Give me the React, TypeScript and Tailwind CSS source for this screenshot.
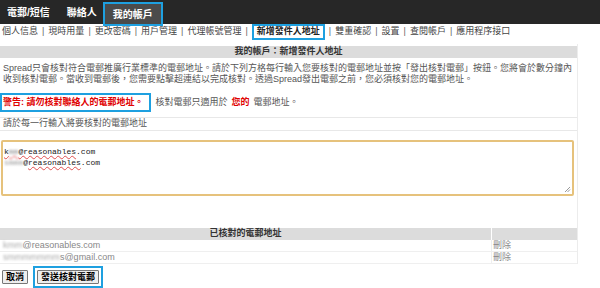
import React from 'react';

const navItems = ['個人信息', '現時用量', '更改密碼', '用戶管理', '代理帳號管理', '新增發件人地址', '雙重確認', '設置', '查閱帳戶', '應用程序接口'];

const verified = [
    { hidden: 'kmm', domain: '@reasonables.com' },
    { hidden: 'smmmmmmm', domain: 's@gmail.com' },
];

export default function App() {
    return (
        <div className="w-[600px] h-[288px] bg-white overflow-hidden font-['Liberation_Sans','Noto_Sans_CJK_TC',sans-serif] text-[#333]">
            {/* top bar */}
            <div className="h-[24px] bg-[#272727] flex items-start pl-[7px] text-white font-bold text-[10px]">
                <div className="h-[24px] flex items-center">電郵/短信</div>
                <div className="h-[24px] flex items-center ml-[17px]">聯絡人</div>
                <div className="relative z-10 ml-[6px] mt-[2px] h-[24px] w-[60px] border-2 border-[#1ea0e0] bg-[#4b4b4b] flex items-center justify-center">
                    我的帳戶
                </div>
            </div>

            {/* sub nav */}
            <div className="h-[16px] flex items-stretch pl-[2px] text-[9px] text-[#444]">
                {navItems.map((item, i) => (
                    <React.Fragment key={item}>
                        {i > 0 && <span className="flex items-center px-[4px] text-[#666]">|</span>}
                        {item === '新增發件人地址' ? (
                            <span className="flex items-center border-2 border-[#1ea0e0] px-[3px] font-bold text-[#222]">{item}</span>
                        ) : (
                            <span className="flex items-center">{item}</span>
                        )}
                    </React.Fragment>
                ))}
            </div>

            {/* panel */}
            <div className="w-[578px] mt-[4px] pt-[2px] border-r border-[#ececec]">
                <div className="h-[12px] bg-[#dcdcdc] flex items-center justify-center text-[9px] font-bold text-[#333]">
                    我的帳戶：新增發件人地址
                </div>

                <p className="mt-[5px] pl-[3px] pr-[4px] text-[9px] leading-[11px] text-[#555]">
                    Spread只會核對符合電郵推廣行業標準的電郵地址。請於下列方格每行輸入您要核對的電郵地址並按「發出核對電郵」按鈕。您將會於數分鐘內收到核對電郵。當收到電郵後，您需要點擊超連結以完成核對。透過Spread發出電郵之前，您必須核對您的電郵地址。
                </p>

                <div className="mt-[8px] flex items-center pb-[5px] border-b border-[#e8e8e8] text-[9px]">
                    <span className="h-[19px] flex items-center border-2 border-[#1ea0e0] pl-[1px] pr-[5px] font-bold text-[#e00000]">
                        警告: 請勿核對聯絡人的電郵地址。
                    </span>
                    <span className="ml-[5px] text-[#555]">核對電郵只適用於</span>
                    <span className="mx-[4px] font-bold text-[#e00000]">您的</span>
                    <span className="text-[#555]">電郵地址。</span>
                </div>

                <div className="h-[13px] flex items-center pl-[3px] border-b border-[#e8e8e8] text-[9px] text-[#555]">
                    請於每一行輸入將要核對的電郵地址
                </div>

                <div className="relative mt-[9px] ml-[1px] w-[573px] h-[56px] border-2 border-[#e6c27c] rounded-[2px] bg-white pt-[4px] pl-[1px] font-['Liberation_Mono',monospace] text-[8px] leading-[11px] text-[#222]">
                    <div>
                        <span className="underline decoration-wavy decoration-[#e05050]">
                            k<span className="blur-[1px] text-[#888]">mm</span>@reasonables
                        </span>
                        .com
                    </div>
                    <div>
                        <span className="blur-[1px] text-[#999]">smmm</span>
                        @<span className="underline decoration-wavy decoration-[#e05050]">reasonables</span>.com
                    </div>
                    <svg className="absolute right-[1px] bottom-[1px]" width="7" height="7" viewBox="0 0 7 7">
                        <path d="M6 1 L1 6 M6 3.5 L3.5 6" stroke="#999" strokeWidth="1" />
                    </svg>
                </div>

                <div className="mt-[32px] h-[12px] bg-[#dcdcdc] flex text-[9px] font-bold text-[#333]">
                    <div className="w-[491px] flex items-center justify-center">已核對的電郵地址</div>
                    <div className="flex-1 border-l border-white" />
                </div>
                {verified.map((v, i) => (
                    <div key={i} className="h-[12px] flex border-b border-[#efefef] text-[9px] text-[#888]">
                        <div className="w-[491px] flex items-center pl-[3px] font-['Liberation_Sans',sans-serif]">
                            <span className="blur-[1px] text-[#aaa]">{v.hidden}</span>
                            {v.domain}
                        </div>
                        <div className="flex-1 flex items-center pl-[1px] border-l border-[#efefef]">刪除</div>
                    </div>
                ))}
            </div>

            {/* buttons */}
            <div className="mt-[2px] flex items-center pl-[2px] text-[9px] font-bold text-black">
                <button type="button" className="h-[14px] px-[3px] border border-[#777] bg-[#eee] rounded-[1px] leading-none">
                    取消
                </button>
                <div className="ml-[5px] border-2 border-[#1ea0e0] p-[2px]">
                    <button type="button" className="h-[14px] px-[3px] border border-[#777] bg-[#eee] rounded-[1px] leading-none">
                        發送核對電郵
                    </button>
                </div>
            </div>
        </div>
    );
}
